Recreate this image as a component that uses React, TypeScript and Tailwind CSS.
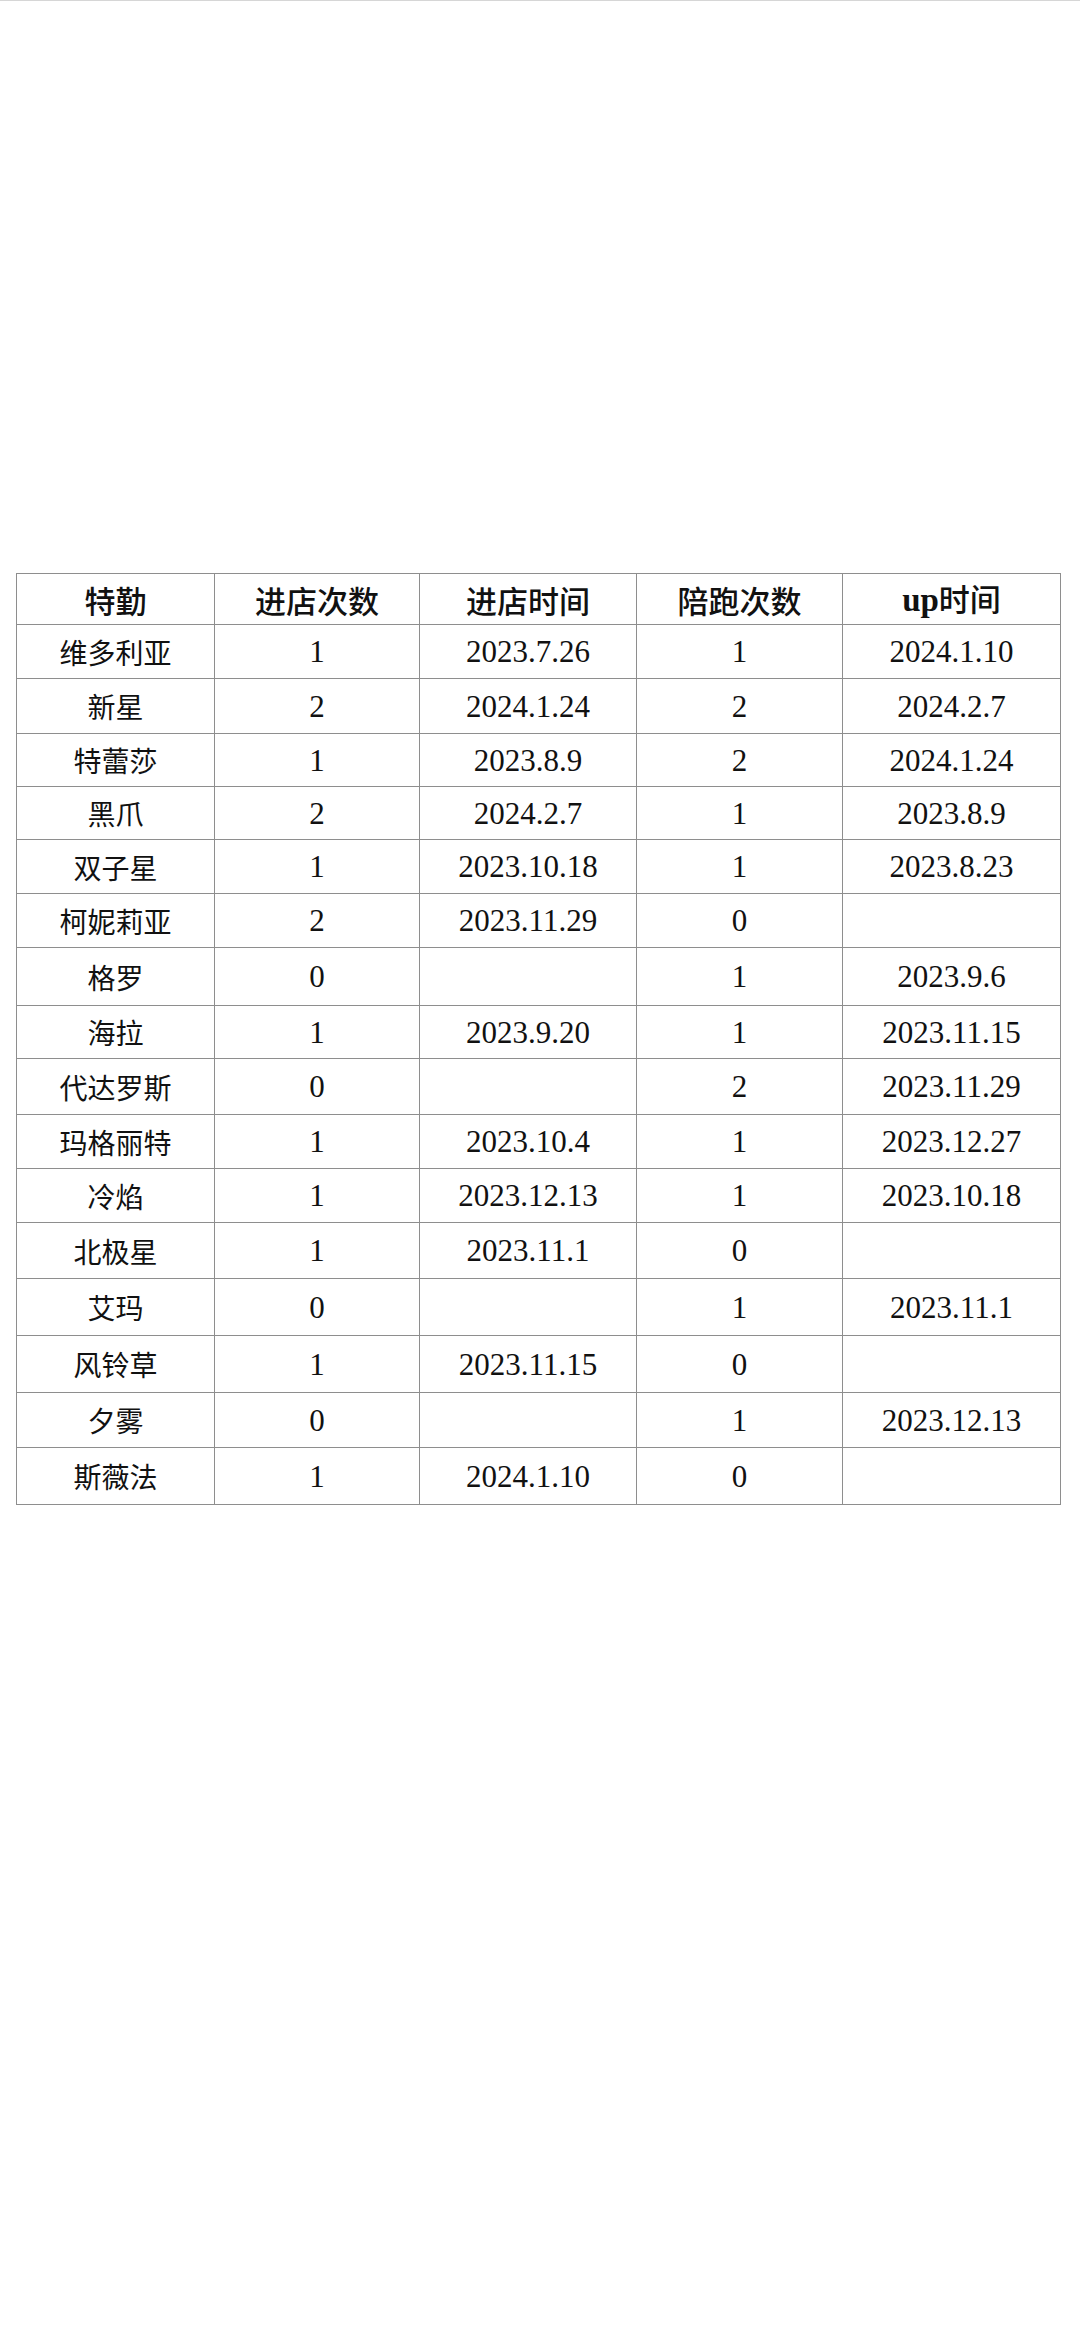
const COLS = ["特勤", "进店次数", "进店时间", "陪跑次数", "up时间"];

type Row = { name: string; visits: number; visitDate: string; runs: number; upDate: string; h: string };

const ROWS: Row[] = [
  { name: "维多利亚", visits: 1, visitDate: "2023.7.26", runs: 1, upDate: "2024.1.10", h: "h-[54px]" },
  { name: "新星", visits: 2, visitDate: "2024.1.24", runs: 2, upDate: "2024.2.7", h: "h-[55px]" },
  { name: "特蕾莎", visits: 1, visitDate: "2023.8.9", runs: 2, upDate: "2024.1.24", h: "h-[53px]" },
  { name: "黑爪", visits: 2, visitDate: "2024.2.7", runs: 1, upDate: "2023.8.9", h: "h-[53px]" },
  { name: "双子星", visits: 1, visitDate: "2023.10.18", runs: 1, upDate: "2023.8.23", h: "h-[54px]" },
  { name: "柯妮莉亚", visits: 2, visitDate: "2023.11.29", runs: 0, upDate: "", h: "h-[54px]" },
  { name: "格罗", visits: 0, visitDate: "", runs: 1, upDate: "2023.9.6", h: "h-[58px]" },
  { name: "海拉", visits: 1, visitDate: "2023.9.20", runs: 1, upDate: "2023.11.15", h: "h-[53px]" },
  { name: "代达罗斯", visits: 0, visitDate: "", runs: 2, upDate: "2023.11.29", h: "h-[56px]" },
  { name: "玛格丽特", visits: 1, visitDate: "2023.10.4", runs: 1, upDate: "2023.12.27", h: "h-[54px]" },
  { name: "冷焰", visits: 1, visitDate: "2023.12.13", runs: 1, upDate: "2023.10.18", h: "h-[54px]" },
  { name: "北极星", visits: 1, visitDate: "2023.11.1", runs: 0, upDate: "", h: "h-[56px]" },
  { name: "艾玛", visits: 0, visitDate: "", runs: 1, upDate: "2023.11.1", h: "h-[57px]" },
  { name: "风铃草", visits: 1, visitDate: "2023.11.15", runs: 0, upDate: "", h: "h-[57px]" },
  { name: "夕雾", visits: 0, visitDate: "", runs: 1, upDate: "2023.12.13", h: "h-[55px]" },
  { name: "斯薇法", visits: 1, visitDate: "2024.1.10", runs: 0, upDate: "", h: "h-[57px]" },
];

const cjk = "font-['Noto_Sans_CJK_SC','Noto_Sans',sans-serif]";
const serif = "font-['Liberation_Serif','Noto_Sans_CJK_SC',serif]";
const cell = "border border-[#8e8e8e] p-0 text-center align-middle leading-none text-[#111]";

export default function App() {
  return (
    <div className="min-h-[2340px] border-t border-[#d6d6d6] bg-white pl-4 pr-5 pt-[572px]">
      <table className="w-full table-fixed border-collapse">
        <colgroup>
          <col className="w-[198px]" />
          <col className="w-[205px]" />
          <col className="w-[217px]" />
          <col className="w-[206px]" />
          <col className="w-[218px]" />
        </colgroup>
        <thead>
          <tr className="h-[51px]">
            {COLS.map((c) => (
              <th key={c} className={`${cell} ${cjk} text-[31px] font-medium`}>
                {c === "up时间" ? (
                  <>
                    <span className={`${serif} text-[33px] font-bold`}>up</span>时间
                  </>
                ) : (
                  c
                )}
              </th>
            ))}
          </tr>
        </thead>
        <tbody>
          {ROWS.map((r) => (
            <tr key={r.name} className={r.h}>
              <td className={`${cell} ${cjk} text-[28px]`}>{r.name}</td>
              <td className={`${cell} ${serif} text-[31px]`}>{r.visits}</td>
              <td className={`${cell} ${serif} text-[31px]`}>{r.visitDate}</td>
              <td className={`${cell} ${serif} text-[31px]`}>{r.runs}</td>
              <td className={`${cell} ${serif} text-[31px]`}>{r.upDate}</td>
            </tr>
          ))}
        </tbody>
      </table>
    </div>
  );
}
